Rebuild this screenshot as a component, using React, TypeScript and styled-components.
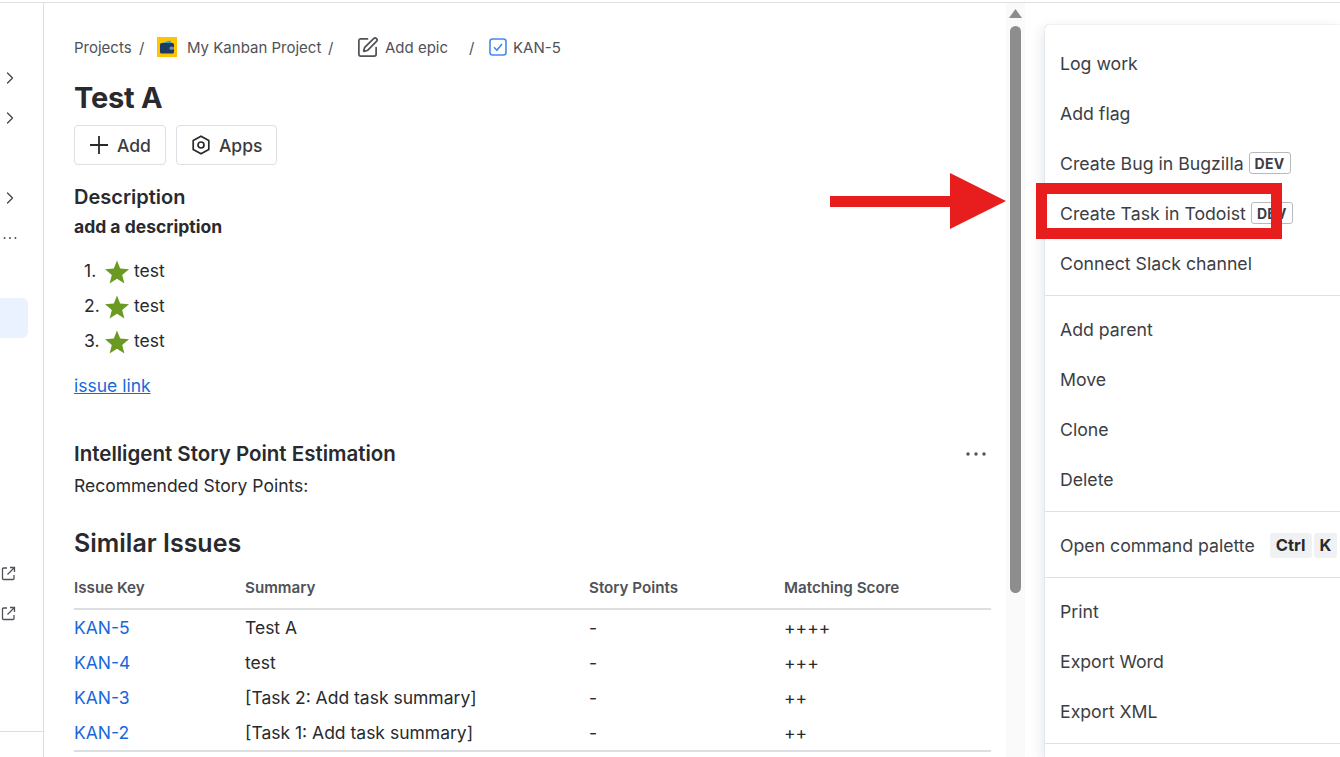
import React from "react";
import styled, { createGlobalStyle } from "styled-components";
import { ChevronRight, SquarePen } from "lucide-react";

const Global = createGlobalStyle`
  html, body { margin: 0; padding: 0; background: #fff; overflow: hidden; }
  body { font-family: Inter, "Noto Sans", sans-serif; color: #292a2e; }
`;

const Page = styled.div`
  position: relative;
  width: 1340px;
  height: 757px;
  overflow: hidden;
  display: flex;
  flex-direction: column;
  background: #fff;
`;
const TopRule = styled.div`
  flex: none;
  border-bottom: 1px solid #dfe1e4;
  height: 1px;
  padding-top: 1px;
`;
const Body = styled.div`
  flex: 1;
  display: flex;
  min-height: 0;
`;
const Sidebar = styled.nav`
  width: 43px;
  flex: none;
  border-right: 1px solid #dddee1;
  display: flex;
  flex-direction: column;
  padding-top: 55px;
  overflow: hidden;
`;
const SideRow = styled.div<{ $active?: boolean }>`
  height: 40px;
  flex: none;
  width: 28px;
  display: flex;
  align-items: center;
  justify-content: flex-end;
  padding: 0 8px 0 0;
  box-sizing: border-box;
  color: #44464c;
  background: ${(p) => (p.$active ? "#e9f2fe" : "transparent")};
  border-radius: 0 6px 6px 0;
`;
const SideGap = styled.div`
  flex: 1;
`;
const SideFoot = styled.div`
  border-top: 1px solid #dddee1;
  height: 25px;
  flex: none;
`;
const SideSpacer = styled.div`
  height: 215px;
  flex: none;
`;
const Main = styled.main`
  width: 962px;
  flex: none;
  box-sizing: border-box;
  padding: 34px 15px 0 30px;
  overflow: hidden;
`;
const Crumbs = styled.div`
  display: flex;
  align-items: center;
  height: 20px;
  font-size: 15px;
  color: #505258;
`;
const Crumb = styled.span<{ $w: number }>`
  display: flex;
  align-items: center;
  justify-content: space-between;
  white-space: nowrap;
  width: ${(p) => p.$w}px;
  flex: none;
`;
const CrumbSlash = styled.span<{ $w: number }>`
  display: flex;
  width: ${(p) => p.$w}px;
  flex: none;
  color: #505258;
`;
const Gap = styled.span<{ $w: number }>`
  width: ${(p) => p.$w}px;
  flex: none;
`;
const ProjectLogo = styled.span`
  width: 20px;
  height: 20px;
  flex: none;
  background: #ffc400;
  display: flex;
  align-items: center;
  justify-content: center;
`;
const Title = styled.h1`
  margin: 23px 0 0;
  font-size: 29px;
  line-height: 36px;
  font-weight: 700;
  color: #292a2e;
  letter-spacing: -0.2px;
`;
const Actions = styled.div`
  display: flex;
  gap: 10px;
  margin-top: 9px;
`;
const ActionBtn = styled.button`
  height: 40px;
  box-sizing: border-box;
  background: #fff;
  border: 1px solid #dcdfe4;
  border-radius: 4px;
  padding: 0 14px;
  display: flex;
  align-items: center;
  gap: 8px;
  font: 500 17.5px Inter, sans-serif;
  color: #3a3b40;
`;
const H2 = styled.h2`
  margin: 20px 0 0;
  font-size: 20px;
  line-height: 24px;
  font-weight: 600;
  color: #292a2e;
`;
const Lead = styled.div`
  margin-top: 7px;
  font-size: 17.5px;
  line-height: 22px;
  font-weight: 700;
`;
const Numbered = styled.ol`
  margin: 15px 0 0;
  padding: 0;
  list-style: none;
`;
const NumItem = styled.li`
  height: 35px;
  display: flex;
  align-items: center;
  font-size: 17.5px;
  padding-left: 10px;
`;
const NumLabel = styled.span`
  width: 21px;
  flex: none;
`;
const StarMark = styled.svg`
  flex: none;
  margin-right: 5px;
  margin-top: 2px;
`;
const Anchor = styled.a`
  display: block;
  margin-top: 16px;
  font-size: 17.5px;
  line-height: 24px;
  color: #1868db;
  text-decoration: underline;
`;
const PanelHead = styled.div`
  margin-top: 44px;
  display: flex;
  align-items: center;
  justify-content: space-between;
  height: 24px;
  padding-right: 3px;
`;
const PanelTitle = styled.h3`
  margin: 0;
  font-size: 20.5px;
  font-weight: 600;
  line-height: 24px;
  color: #292a2e;
`;
const Para = styled.p`
  margin: 8px 0 0;
  font-size: 17.5px;
  line-height: 24px;
`;
const Similar = styled.h2`
  margin: 29px 0 0;
  font-size: 25px;
  font-weight: 600;
  line-height: 32px;
`;
const Grid = styled.div`
  display: grid;
  grid-template-columns: 171px 344px 195px 1fr;
  margin-top: 14px;
`;
const Head = styled.div`
  height: 37px;
  display: flex;
  align-items: center;
  font-size: 15.2px;
  font-weight: 600;
  color: #505258;
  border-bottom: 2px solid #dddee1;
  padding-bottom: 6px;
  box-sizing: border-box;
`;
const Cell = styled.div<{ $last?: boolean }>`
  height: ${(p) => (p.$last ? 37 : 35)}px;
  display: flex;
  align-items: center;
  font-size: 17.5px;
  box-sizing: border-box;
  ${(p) => (p.$last ? "border-bottom: 2px solid #dddee1;" : "")}
`;
const KeyLink = styled.a`
  color: #1868db;
`;
const Track = styled.div`
  width: 19px;
  flex: none;
  background: #fafafa;
  display: flex;
  flex-direction: column;
  align-items: center;
  padding-top: 6px;
`;
const Thumb = styled.div`
  width: 11px;
  height: 567px;
  margin-top: 8px;
  flex: none;
  background: #8d8d8d;
  border-radius: 6px;
`;
const Menu = styled.aside`
  margin: 22px 0 0 20px;
  flex: 1;
  background: #fff;
  border-top-left-radius: 4px;
  box-shadow: 0 0 1px rgba(9, 30, 66, 0.35), -2px 4px 14px rgba(9, 30, 66, 0.12);
  padding-top: 13px;
  overflow: hidden;
`;
const Section = styled.div<{ $first?: boolean; $last?: boolean }>`
  padding: ${(p) => (p.$first ? 0 : 8)}px 0 7px;
  border-bottom: ${(p) => (p.$last ? "none" : "1px solid #dfe1e4")};
`;
const MenuRow = styled.div`
  height: 50px;
  padding-left: 15px;
  display: flex;
  align-items: center;
  gap: 5px;
  font-size: 17.7px;
  color: #3c3e44;
  white-space: nowrap;
`;
const Lozenge = styled.span`
  height: 22px;
  padding: 0 5px;
  display: inline-flex;
  align-items: center;
  border: 1px solid #b7b9be;
  border-radius: 3px;
  font-size: 14px;
  font-weight: 700;
  color: #3c3e44;
  letter-spacing: 0.3px;
  box-sizing: border-box;
`;
const Kbd = styled.span`
  height: 25px;
  padding: 0 6px;
  display: inline-flex;
  align-items: center;
  background: #f0f1f2;
  border-radius: 3px;
  font-size: 16.5px;
  font-weight: 700;
  color: #292a2e;
`;
const KbdGroup = styled.span`
  display: inline-flex;
  gap: 2px;
  margin-left: 10px;
`;
const ArrowOverlay = styled.svg`
  position: absolute;
  left: 830px;
  top: 172px;
`;
const RedBox = styled.div`
  position: absolute;
  left: 1036px;
  top: 183px;
  width: 246px;
  height: 56px;
  box-sizing: border-box;
  border: 11px solid #e81e1e;
`;
const LinkOutMark = styled.svg`
  flex: none;
  margin-right: 4px;
`;

const Star = () => (
  <StarMark width="24" height="24" viewBox="0 0 24 24">
    <polygon points="12,0.5 15.2,8.6 24,9.2 17.2,14.9 19.4,23.5 12,18.8 4.6,23.5 6.8,14.9 0,9.2 8.8,8.6" fill="#6b9a23" />
  </StarMark>
);
const Wallet = () => (
  <svg width="16" height="14" viewBox="0 0 16 14">
    <path d="M3 3 L11 0.5 L13 3 Z" fill="#2aa7c9" />
    <rect x="1" y="3" width="14" height="10.5" rx="1.5" fill="#1d3a63" />
    <rect x="10.5" y="6.8" width="4.5" height="3" rx="1.2" fill="#6f8fb5" />
  </svg>
);
const CheckTile = () => (
  <svg width="18" height="18" viewBox="0 0 18 18">
    <rect x="1" y="1" width="16" height="16" rx="2.5" fill="#fff" stroke="#4688ec" strokeWidth="1.6" />
    <path d="M5 9.3 L7.9 12.2 L13 6" fill="none" stroke="#4688ec" strokeWidth="1.6" />
  </svg>
);
const PlusGlyph = () => (
  <svg width="20" height="20" viewBox="0 0 20 20">
    <path d="M10 1V19M1 10H19" fill="none" stroke="#292a2e" strokeWidth="1.8" />
  </svg>
);
const AppsGlyph = () => (
  <svg width="20" height="20" viewBox="0 0 20 20" fill="none" stroke="#292a2e" strokeWidth="1.7">
    <path d="M10 1.2 L17.8 5.6 V14.4 L10 18.8 L2.2 14.4 V5.6 Z" strokeLinejoin="round" />
    <circle cx="10" cy="10" r="3" />
  </svg>
);
const Dots = ({ step, r }: { step: number; r: number }) => (
  <svg width="24" height="8" viewBox="0 0 24 8" fill="#505258">
    <circle cx={12 - step} cy="4" r={r} />
    <circle cx="12" cy="4" r={r} />
    <circle cx={12 + step} cy="4" r={r} />
  </svg>
);
const LinkOut = () => (
  <LinkOutMark width="15" height="15" viewBox="0 0 15 15" fill="none" stroke="#505258" strokeWidth="1.3">
    <path d="M6 2H2.5A1 1 0 0 0 1.5 3V12.5A1 1 0 0 0 2.5 13.5H12A1 1 0 0 0 13 12.5V9" />
    <path d="M6.5 8.5L13.5 1.5M9 1.5H13.5V6" />
  </LinkOutMark>
);

const rows = [
  ["KAN-5", "Test A", "-", "++++"],
  ["KAN-4", "test", "-", "+++"],
  ["KAN-3", "[Task 2: Add task summary]", "-", "++"],
  ["KAN-2", "[Task 1: Add task summary]", "-", "++"],
];

export default function App() {
  return (
    <Page>
      <Global />
      <TopRule />
      <Body>
        <Sidebar>
          <SideRow><ChevronRight size={20} strokeWidth={1.5} /></SideRow>
          <SideRow><ChevronRight size={20} strokeWidth={1.5} /></SideRow>
          <SideRow />
          <SideRow><ChevronRight size={20} strokeWidth={1.5} /></SideRow>
          <SideRow><Dots step={6.5} r={1.2} /></SideRow>
          <SideRow />
          <SideRow $active />
          <SideSpacer />
          <SideRow><LinkOut /></SideRow>
          <SideRow><LinkOut /></SideRow>
          <SideGap />
          <SideFoot />
        </Sidebar>
        <Main>
          <Crumbs>
            <Crumb $w={83}>Projects<CrumbSlash $w={18}>/</CrumbSlash></Crumb>
            <ProjectLogo><Wallet /></ProjectLogo>
            <Gap $w={10} />
            <Crumb $w={169}>My Kanban Project<CrumbSlash $w={28}>/</CrumbSlash></Crumb>
            <SquarePen size={23} color="#505258" strokeWidth={1.8} />
            <Gap $w={6} />
            <Crumb $w={104}>Add epic<CrumbSlash $w={20}>/</CrumbSlash></Crumb>
            <CheckTile />
            <Gap $w={6} />
            <Crumb $w={60}>KAN-5</Crumb>
          </Crumbs>
          <Title>Test A</Title>
          <Actions>
            <ActionBtn><PlusGlyph />Add</ActionBtn>
            <ActionBtn><AppsGlyph />Apps</ActionBtn>
          </Actions>
          <H2>Description</H2>
          <Lead>add a description</Lead>
          <Numbered>
            {[1, 2, 3].map((n) => (
              <NumItem key={n}><NumLabel>{n}.</NumLabel><Star />test</NumItem>
            ))}
          </Numbered>
          <Anchor>issue link</Anchor>
          <PanelHead>
            <PanelTitle>Intelligent Story Point Estimation</PanelTitle>
            <Dots step={8} r={1.7} />
          </PanelHead>
          <Para>Recommended Story Points:</Para>
          <Similar>Similar Issues</Similar>
          <Grid>
            <Head>Issue Key</Head>
            <Head>Summary</Head>
            <Head>Story Points</Head>
            <Head>Matching Score</Head>
            {rows.map((r, i) =>
              r.map((c, j) => (
                <Cell key={`${i}-${j}`} $last={i === rows.length - 1}>
                  {j === 0 ? <KeyLink>{c}</KeyLink> : c}
                </Cell>
              ))
            )}
          </Grid>
        </Main>
        <Track>
          <svg width="13" height="9" viewBox="0 0 13 9"><polygon points="6.5,0 13,9 0,9" fill="#8d8d8d" /></svg>
          <Thumb />
        </Track>
        <Menu>
          <Section $first>
            <MenuRow>Log work</MenuRow>
            <MenuRow>Add flag</MenuRow>
            <MenuRow>Create Bug in Bugzilla <Lozenge>DEV</Lozenge></MenuRow>
            <MenuRow>Create Task in Todoist <Lozenge>DEV</Lozenge></MenuRow>
            <MenuRow>Connect Slack channel</MenuRow>
          </Section>
          <Section>
            <MenuRow>Add parent</MenuRow>
            <MenuRow>Move</MenuRow>
            <MenuRow>Clone</MenuRow>
            <MenuRow>Delete</MenuRow>
          </Section>
          <Section>
            <MenuRow>Open command palette <KbdGroup><Kbd>Ctrl</Kbd><Kbd>K</Kbd></KbdGroup></MenuRow>
          </Section>
          <Section>
            <MenuRow>Print</MenuRow>
            <MenuRow>Export Word</MenuRow>
            <MenuRow>Export XML</MenuRow>
          </Section>
        </Menu>
      </Body>
      <ArrowOverlay width="178" height="58" viewBox="0 0 178 58">
        <polygon points="0,24 120,24 120,1 176,29 120,57 120,35 0,35" fill="#e81e1e" />
      </ArrowOverlay>
      <RedBox />
    </Page>
  );
}
